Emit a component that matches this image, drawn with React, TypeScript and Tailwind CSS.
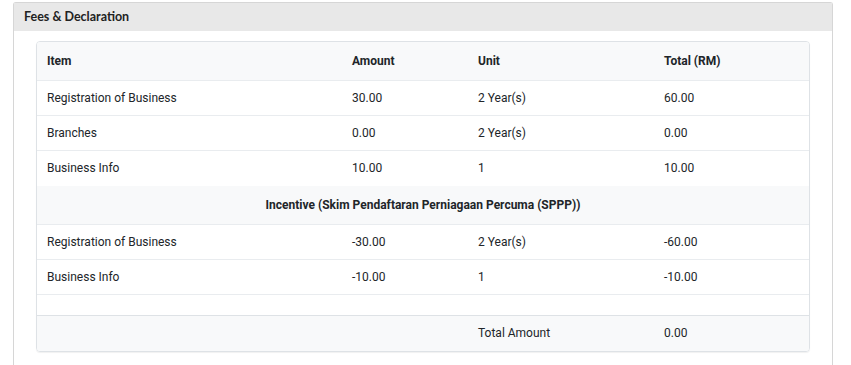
export default function App() {
  const rows = [
    ["Registration of Business", "30.00", "2 Year(s)", "60.00"],
    ["Branches", "0.00", "2 Year(s)", "0.00"],
    ["Business Info", "10.00", "1", "10.00"],
  ];
  const incentive = [
    ["Registration of Business", "-30.00", "2 Year(s)", "-60.00"],
    ["Business Info", "-10.00", "1", "-10.00"],
  ];

  return (
    <div className="h-[365px] w-[851px] bg-white pt-[2px] pl-[13px] font-['Roboto',sans-serif] text-[12px] text-[#212529]">
      <div className="h-[363px] w-[820px] border-x border-t border-[#d6d6d6] rounded-t-[3px]">
        <div className="flex h-[28px] items-center bg-[#e8e8e8] px-[10px] font-['Lato',sans-serif] text-[12.5px] font-bold text-[#222]">
          Fees &amp; Declaration
        </div>
        <div className="px-[22px] pt-[10px]">
          <div className="overflow-hidden rounded-[4px] border border-[#dee2e6] shadow-[0_1px_1px_rgba(0,0,0,0.06)]">
            <table className="w-full border-collapse table-fixed">
              <colgroup>
                <col className="w-[305px]" />
                <col className="w-[126px]" />
                <col className="w-[186px]" />
                <col />
              </colgroup>
              <thead>
                <tr className="h-[38px] bg-[#f8f9fa] text-left font-bold">
                  <th className="px-[10px] font-bold">Item</th>
                  <th className="px-[10px] font-bold">Amount</th>
                  <th className="px-[10px] font-bold">Unit</th>
                  <th className="px-[10px] font-bold">Total (RM)</th>
                </tr>
              </thead>
              <tbody>
                {rows.map((r, i) => (
                  <tr key={i} className={`${i === 2 ? "h-[36px]" : "h-[35px]"} border-t border-[#e9ecef]`}>
                    {r.map((c, j) => (
                      <td key={j} className="px-[10px]">{c}</td>
                    ))}
                  </tr>
                ))}
                <tr className="h-[38px] bg-[#f8f9fa]">
                  <td colSpan={4} className="text-center font-bold">
                    Incentive (Skim Pendaftaran Perniagaan Percuma (SPPP))
                  </td>
                </tr>
                {incentive.map((r, i) => (
                  <tr key={i} className="h-[35px] border-t border-[#e9ecef]">
                    {r.map((c, j) => (
                      <td key={j} className="px-[10px]">{c}</td>
                    ))}
                  </tr>
                ))}
                <tr className="h-[21px] border-t border-[#e9ecef]">
                  <td colSpan={4}></td>
                </tr>
                <tr className="h-[36px] border-t border-[#dee2e6] bg-[#f8f9fa]">
                  <td></td>
                  <td></td>
                  <td className="px-[10px]">Total Amount</td>
                  <td className="px-[10px]">0.00</td>
                </tr>
              </tbody>
            </table>
          </div>
        </div>
      </div>
    </div>
  );
}
